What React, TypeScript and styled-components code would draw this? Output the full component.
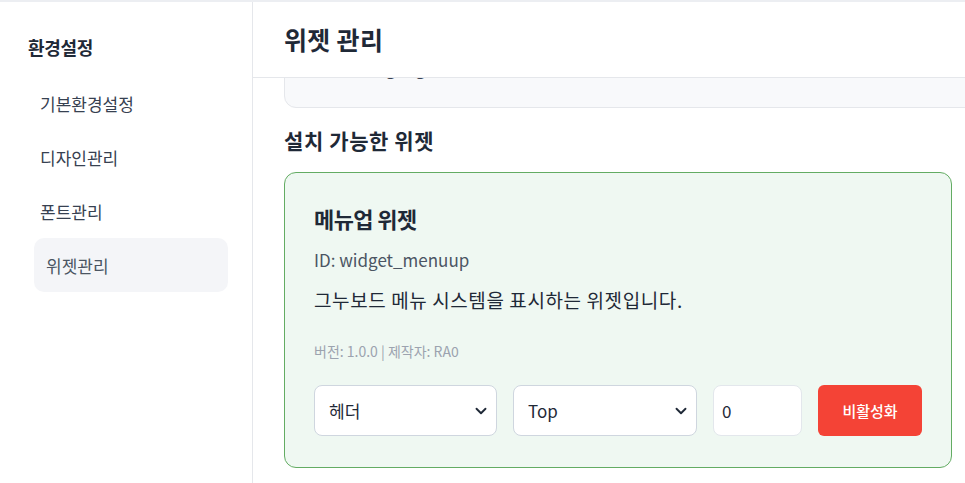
import { useLayoutEffect, useRef } from "react";
import styled, { createGlobalStyle } from "styled-components";
import { ChevronDown } from "lucide-react";

const GlobalStyle = createGlobalStyle`
    html, body {
        margin: 0;
        height: 100%;
        overflow: hidden;
        background: #ffffff;
    }
    body {
        font-family: "Noto Sans CJK KR", "Noto Sans", sans-serif;
        color: #1f2937;
    }
    * {
        box-sizing: border-box;
    }
`;

const Layout = styled.div`
    display: flex;
    height: 100vh;
    border-top: 2px solid #eceef2;
`;

const Sidebar = styled.aside`
    width: 253px;
    flex-shrink: 0;
    border-right: 1px solid #e5e7eb;
    padding: 32px 24px 0 28px;
`;

const SidebarTitle = styled.h2`
    margin: 0 0 16px;
    font-size: 18px;
    line-height: 26px;
    font-weight: 700;
    letter-spacing: -0.3px;
    color: #1f2937;
`;

const Nav = styled.nav`
    display: flex;
    flex-direction: column;
    margin-left: 6px;
`;

const NavItem = styled.a<{ $active?: boolean }>`
    display: flex;
    align-items: center;
    height: 54px;
    padding-left: ${(p) => (p.$active ? "12px" : "6px")};
    border-radius: 10px;
    font-size: 17px;
    color: ${(p) => (p.$active ? "#4b5563" : "#374151")};
    background: ${(p) => (p.$active ? "#f4f5f8" : "transparent")};
    text-decoration: none;
`;

const Main = styled.main`
    flex: 1;
    min-width: 0;
    display: flex;
    flex-direction: column;
`;

const Header = styled.header`
    height: 76px;
    flex-shrink: 0;
    display: flex;
    align-items: center;
    padding: 0 31px 2px;
    border-bottom: 1px solid #e5e7eb;
`;

const PageTitle = styled.h1`
    margin: 0;
    font-size: 25px;
    font-weight: 700;
    letter-spacing: 0.3px;
    color: #1f2937;
`;

const Scroller = styled.div`
    position: relative;
    flex: 1;
    overflow: hidden;
    padding: 24px 13px 60px 31px;
`;

const InfoCard = styled.div`
    margin-right: -40px;
    padding: 24px 30px 27px;
    border: 1px solid #e5e7eb;
    border-radius: 12px;
    background: #f8f9fb;
    font-size: 16px;
    line-height: 24px;
    color: #374151;
`;

const InfoLine = styled.p`
    margin: 0 0 4px;

    &:last-child {
        margin-bottom: 0;
    }
`;

const SectionTitle = styled.h2`
    margin: 18px 0 18px;
    font-size: 21px;
    line-height: 28px;
    font-weight: 700;
    letter-spacing: 0.6px;
    color: #1f2937;
`;

const WidgetCard = styled.div`
    width: 668px;
    padding: 30px 29px 31px;
    border: 1px solid #63ac63;
    border-radius: 12px;
    background: #eff8f2;
`;

const WidgetName = styled.h3`
    margin: 0;
    font-size: 22px;
    line-height: 30px;
    font-weight: 700;
    letter-spacing: -0.6px;
    color: #1f2937;
`;

const WidgetId = styled.div`
    margin-top: 15px;
    font-size: 17px;
    line-height: 24px;
    color: #4b5563;
`;

const WidgetDesc = styled.p`
    margin: 15px 0 0;
    font-size: 19px;
    line-height: 26px;
    letter-spacing: 0.6px;
    color: #1f2937;
`;

const WidgetMeta = styled.div`
    margin-top: 28px;
    font-size: 14px;
    line-height: 20px;
    color: #9ca3af;
`;

const Controls = styled.div`
    display: flex;
    gap: 16px;
    margin-top: 24px;
    height: 51px;
`;

const SelectWrap = styled.div<{ $width: number }>`
    position: relative;
    width: ${(p) => p.$width}px;
    height: 100%;

    svg {
        position: absolute;
        right: 7px;
        top: 50%;
        transform: translateY(-50%);
        pointer-events: none;
        color: #1f2937;
    }
`;

const Select = styled.select`
    appearance: none;
    width: 100%;
    height: 100%;
    padding: 0 32px 0 14px;
    border: 1px solid #cfd6df;
    border-radius: 8px;
    background: #ffffff;
    font-family: inherit;
    font-size: 17px;
    color: #1f2937;
`;

const NumberInput = styled.input`
    width: 89px;
    height: 100%;
    padding: 0 8px;
    border: 1px solid #e3e7ec;
    border-radius: 8px;
    background: #ffffff;
    font-family: inherit;
    font-size: 17px;
    color: #1f2937;
`;

const DangerButton = styled.button`
    width: 104px;
    height: 100%;
    border: none;
    border-radius: 6px;
    background: #f44336;
    color: #ffffff;
    font-family: inherit;
    font-size: 15px;
    font-weight: 500;
`;

const menu = ["기본환경설정", "디자인관리", "폰트관리", "위젯관리"];

const App = () => {
    const scrollRef = useRef<HTMLDivElement>(null);
    const cardRef = useRef<HTMLDivElement>(null);

    useLayoutEffect(() => {
        const scroller = scrollRef.current;
        const card = cardRef.current;
        if (scroller && card) {
            scroller.scrollTop = card.offsetTop + card.offsetHeight - 30;
        }
    }, []);

    return (
        <>
            <GlobalStyle />
            <Layout>
                <Sidebar>
                    <SidebarTitle>환경설정</SidebarTitle>
                    <Nav>
                        {menu.map((label) => (
                            <NavItem key={label} $active={label === "위젯관리"}>
                                {label}
                            </NavItem>
                        ))}
                    </Nav>
                </Sidebar>
                <Main>
                    <Header>
                        <PageTitle>위젯 관리</PageTitle>
                    </Header>
                    <Scroller ref={scrollRef}>
                        <InfoCard ref={cardRef}>
                            <InfoLine>위젯은 플러그인 폴더에서 자동으로 검색됩니다.</InfoLine>
                            <InfoLine>설치 후 위치와 순서를 지정할 수 있습니다.</InfoLine>
                            <InfoLine>경로: /widget/gnu_menu</InfoLine>
                        </InfoCard>
                        <SectionTitle>설치 가능한 위젯</SectionTitle>
                        <WidgetCard>
                            <WidgetName>메뉴업 위젯</WidgetName>
                            <WidgetId>ID: widget_menuup</WidgetId>
                            <WidgetDesc>그누보드 메뉴 시스템을 표시하는 위젯입니다.</WidgetDesc>
                            <WidgetMeta>버전: 1.0.0 | 제작자: RA0</WidgetMeta>
                            <Controls>
                                <SelectWrap $width={183}>
                                    <Select defaultValue="header">
                                        <option value="header">헤더</option>
                                        <option value="footer">푸터</option>
                                        <option value="sidebar">사이드바</option>
                                    </Select>
                                    <ChevronDown size={18} strokeWidth={2.5} />
                                </SelectWrap>
                                <SelectWrap $width={184}>
                                    <Select defaultValue="top">
                                        <option value="top">Top</option>
                                        <option value="bottom">Bottom</option>
                                    </Select>
                                    <ChevronDown size={18} strokeWidth={2.5} />
                                </SelectWrap>
                                <NumberInput type="number" defaultValue={0} />
                                <DangerButton type="button">비활성화</DangerButton>
                            </Controls>
                        </WidgetCard>
                    </Scroller>
                </Main>
            </Layout>
        </>
    );
};

export default App;
